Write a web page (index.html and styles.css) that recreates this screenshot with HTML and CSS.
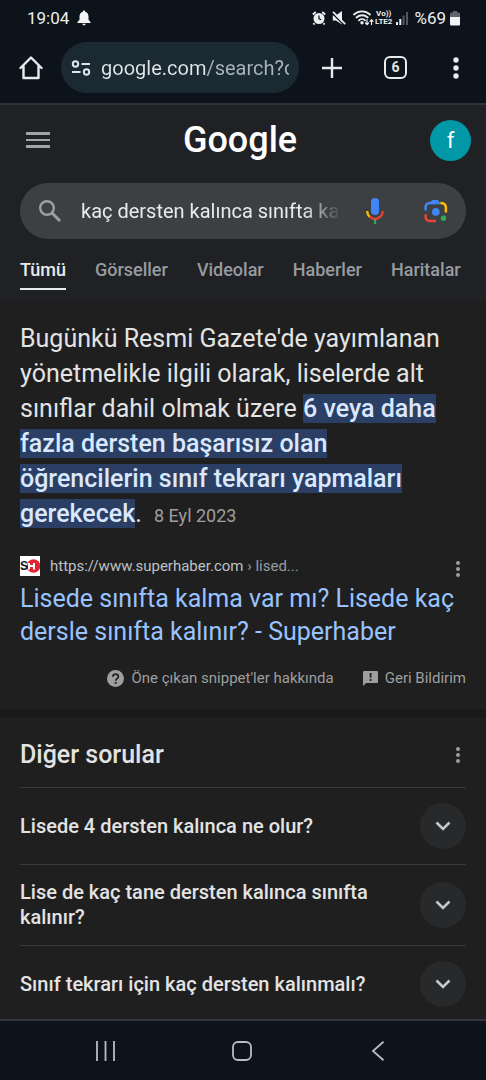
FILE: index.html
```html
<!DOCTYPE html>
<html lang="tr">
<head>
<meta charset="utf-8">
<meta name="viewport" content="width=device-width, initial-scale=1">
<title>Google Arama</title>
<link rel="stylesheet" href="styles.css">
</head>
<body>
<div class="status">
  <span class="clock">19:04</span>
  <svg width="14" height="16" viewBox="0 0 14 16" fill="#f1f3f4" aria-hidden="true"><path d="M7 0.5c.8 0 1.200.5 1.200 1.200 2.300.6 3.300 2.500 3.300 4.800v3.200L13.500 12v1H.500v-1l2-2.300V6.500c0-2.300 1-4.200 3.300-4.800C5.800 1 6.200.500 7 .500zM5.300 13.700h3.400c-.2 1-.9 1.600-1.700 1.600s-1.500-.6-1.700-1.600z"/></svg>
  <div class="status-icons">
    <svg width="14" height="14" viewBox="0 0 14 14" aria-hidden="true"><circle cx="7" cy="7.500" r="5.500" fill="#eceff1"/><path d="M.8 3.500L3.800 1M13.200 3.500L10.200 1M2.500 12.200L1.500 13.500M11.500 12.200l1 1.300" stroke="#eceff1" stroke-width="1.900"/><path d="M7 4.500v3.300l2.200 1" fill="none" stroke="#0d131a" stroke-width="1.200"/></svg>
    <svg class="mute" width="14" height="14" viewBox="0 0 14 14" aria-hidden="true"><path d="M.8 4.500h3L10 0v13.500L3.800 9.500h-3z" fill="#eceff1"/><path d="M0 2L11.500 13.500" stroke="#0d131a" stroke-width="1.300"/><path d="M1 .8L13.200 13.200" stroke="#eceff1" stroke-width="1.700"/></svg>
    <svg class="wifi" width="21" height="16" viewBox="0 0 21 16" fill="none" stroke="#eceff1" stroke-width="1.800" stroke-linecap="round" aria-hidden="true"><path d="M1 4.500C5.500.300 12.500.300 17 4.500M3.500 7.500c3.200-3 8-3 11.200 0M6 10.300c1.700-1.600 4.300-1.600 6 0"/><circle cx="9" cy="12.700" r=".8" fill="#eceff1"/><path d="M14 9.500v5M12.500 13l1.500 1.700 1.500-1.700M18.500 14.500V9.800M17 11.300l1.500-1.700L20 11.300" stroke-width="1.200"/></svg>
    <span class="volte"><span>Vo))</span><span>LTE2</span></span>
    <svg class="signal" width="12" height="14" viewBox="0 0 12 14" aria-hidden="true"><path d="M0 11h2v3H0zM3.300 8h2v6h-2z" fill="#eceff1"/><path d="M6.600 4.500h2V14h-2zM10 1h2v13h-2z" fill="#50575d"/></svg>
    <span class="percent">%69</span>
    <svg width="10" height="15" viewBox="0 0 10 15" aria-hidden="true"><path d="M3 0h4v1.500h1.500C9.500 1.500 10 2 10 3v3H0V3c0-1 .5-1.500 1.500-1.500H3z" fill="#60666b"/><path d="M0 6h10v7c0 1-.5 1.500-1.500 1.500h-7C.5 14.500 0 14 0 13z" fill="#f1f3f4"/></svg>
  </div>
</div>

<div class="toolbar">
  <button class="icon-btn" aria-label="Ana sayfa"><svg width="24" height="24" viewBox="0 0 24 24" fill="none" stroke="#e8eaed" stroke-width="2.400" stroke-linecap="round" stroke-linejoin="round"><path d="M1.500 12L12 1.500 22.500 12M4.500 10v12h15V10"/></svg></button>
  <div class="omnibox">
    <svg width="20" height="16" viewBox="0 0 20 16" fill="none" stroke="#dfe6ea" stroke-width="2" aria-hidden="true"><circle cx="4.500" cy="4" r="2.700"/><path d="M10.500 4H19M1 12h8.500"/><circle cx="15.500" cy="12" r="2.700"/></svg>
    <input class="address" type="text" aria-label="Adres çubuğu" value="google.com/search?q=">
  </div>
  <button class="icon-btn add" aria-label="Yeni sekme"><svg width="22" height="22" viewBox="0 0 22 22" stroke="#e8eaed" stroke-width="2.400"><path d="M11 1v20M1 11h20"/></svg></button>
  <button class="tab-count" aria-label="6 sekme">6</button>
  <button class="icon-btn" aria-label="Menü"><svg width="6" height="22" viewBox="0 0 6 22" fill="#e8eaed"><circle cx="3" cy="3" r="2.700"/><circle cx="3" cy="11" r="2.700"/><circle cx="3" cy="19" r="2.700"/></svg></button>
</div>

<header class="header">
  <div class="brand-row">
    <button class="icon-btn" aria-label="Ana menü"><svg width="24" height="18" viewBox="0 0 24 18" fill="#a0a3a7"><path d="M0 1h24v3H0zM0 8h24v2H0zM0 14h24v3H0z"/></svg></button>
    <a class="logo" href="#">Google</a>
    <button class="avatar" aria-label="Google hesabı">f</button>
  </div>
  <form class="search">
    <button class="icon-btn" type="button" aria-label="Ara"><svg width="24" height="24" viewBox="0 0 24 24" fill="none" stroke="#9aa0a6" stroke-width="2.400"><circle cx="9" cy="9" r="6.800"/><path d="M14 14l8 8" stroke-width="3"/></svg></button>
    <input class="query" type="text" aria-label="Arama" value="kaç dersten kalınca sınıfta kalınır">
    <button class="icon-btn" type="button" aria-label="Sesli arama"><svg width="18" height="26" viewBox="0 0 18 26" fill="none" stroke-width="2.200"><rect x="5" y="0" width="8" height="17" rx="4" fill="#4285f4"/><path d="M1.200 13c0 2.500 1 4.500 2.700 6" stroke="#fbbc04"/><path d="M3.700 18.700c3.300 2.900 7.300 2.900 10.600 0 1.600-1.500 2.500-3.300 2.500-5.700" stroke="#ea4335"/><path d="M9 21.700V26" stroke="#34a853"/></svg></button>
    <button class="icon-btn lens" type="button" aria-label="Google Lens"><svg width="24" height="24" viewBox="0 0 25 25" fill="none" stroke-width="2.600"><path d="M1.700 12V8.500c0-2.600 1.600-4.300 4.200-4.300H12" stroke="#4285f4"/><path d="M6 4.500L8.500 1h6L17 4.500v1H6z" fill="#4285f4"/><path d="M17 4.200c3.600 0 5.800 1.700 5.800 4.800V14" stroke="#fbbc04"/><path d="M1.700 16v2.500c0 2.800 1.500 4.300 4.200 4.300h6.600" stroke="#ea4335"/><circle cx="12.300" cy="13.500" r="4" fill="#4285f4"/><circle cx="20.300" cy="20" r="2.800" fill="#34a853"/></svg></button>
  </form>
  <nav class="tabs">
    <a class="active" href="#">Tümü</a>
    <a href="#">Görseller</a>
    <a href="#">Videolar</a>
    <a href="#">Haberler</a>
    <a href="#">Haritalar</a>
  </nav>
</header>

<main>
  <section class="snippet">
    <p class="answer">Bugünkü Resmi Gazete'de yayımlanan yönetmelikle ilgili olarak, liselerde alt sınıflar dahil olmak üzere <mark>6 veya daha fazla dersten başarısız olan öğrencilerin sınıf tekrarı yapmaları gerekecek</mark>. <time>8 Eyl 2023</time></p>
    <div class="source">
      <svg width="20" height="20" viewBox="0 0 20 20" aria-hidden="true"><rect width="20" height="20" fill="#fff"/><circle cx="13.500" cy="10" r="6.800" fill="#e02430"/><text class="fav-s" x="0" y="14">S</text><path d="M9 7v6.500M9 10h5M14 7v6.500" stroke="#fff" stroke-width="2"/></svg>
      <cite>https://www.superhaber.com<span> › lised...</span></cite>
      <button class="icon-btn more" aria-label="Bu sonuç hakkında"><svg width="4" height="16" viewBox="0 0 4 16" fill="#9e9e9e"><circle cx="2" cy="2" r="2"/><circle cx="2" cy="8" r="2"/><circle cx="2" cy="14" r="2"/></svg></button>
    </div>
    <a class="title" href="#">Lisede sınıfta kalma var mı? Lisede kaç dersle sınıfta kalınır? - Superhaber</a>
    <div class="feedback">
      <a href="#"><svg width="17" height="17" viewBox="0 0 17 17" aria-hidden="true"><circle cx="8.500" cy="8.500" r="8.500" fill="#9e9e9e"/><path d="M5.800 6.800c0-3.600 5.600-3.400 5.600-.2 0 2-2.700 2.100-2.700 4.200" fill="none" stroke="#1f1f1f" stroke-width="1.700"/><path d="M7.800 12h1.800v1.900H7.800z" fill="#1f1f1f"/></svg>Öne çıkan snippet'ler hakkında</a>
      <a href="#"><svg width="15" height="15" viewBox="0 0 15 15" aria-hidden="true"><path d="M1.500 0h12c1 0 1.500.5 1.500 1.500v9c0 1-.5 1.500-1.500 1.500H3l-3 3V1.500C0 .5.500 0 1.500 0z" fill="#9e9e9e"/><path d="M6.700 2h1.800v4.700H6.700zM6.700 8h1.800v1.900H6.700z" fill="#1f1f1f"/></svg>Geri Bildirim</a>
    </div>
  </section>

  <section class="questions">
    <div class="questions-head">
      <h2>Diğer sorular</h2>
      <button class="icon-btn more" aria-label="Diğer sorular hakkında"><svg width="4" height="16" viewBox="0 0 4 16" fill="#9e9e9e"><circle cx="2" cy="2" r="2"/><circle cx="2" cy="8" r="2"/><circle cx="2" cy="14" r="2"/></svg></button>
    </div>
    <button class="question"><span>Lisede 4 dersten kalınca ne olur?</span><span class="chevron"><svg width="16" height="10" viewBox="0 0 16 10" fill="none" stroke="#c4c7d0" stroke-width="2.600"><path d="M1.500 1.500L8 8l6.500-6.500"/></svg></span></button>
    <button class="question"><span>Lise de kaç tane dersten kalınca sınıfta kalınır?</span><span class="chevron"><svg width="16" height="10" viewBox="0 0 16 10" fill="none" stroke="#c4c7d0" stroke-width="2.600"><path d="M1.500 1.500L8 8l6.500-6.500"/></svg></span></button>
    <button class="question"><span>Sınıf tekrarı için kaç dersten kalınmalı?</span><span class="chevron"><svg width="16" height="10" viewBox="0 0 16 10" fill="none" stroke="#c4c7d0" stroke-width="2.600"><path d="M1.500 1.500L8 8l6.500-6.500"/></svg></span></button>
  </section>
</main>

<nav class="system-nav">
  <button class="icon-btn" aria-label="Son uygulamalar"><svg width="20" height="20" viewBox="0 0 20 20" stroke="#b9bdc1" stroke-width="1.800"><path d="M1 0v20M9.500 0v20M18 0v20"/></svg></button>
  <button class="icon-btn" aria-label="Ana ekran"><svg width="20" height="20" viewBox="0 0 20 20" fill="none" stroke="#b9bdc1" stroke-width="1.800"><rect x="1" y="1" width="18" height="18" rx="5"/></svg></button>
  <button class="icon-btn" aria-label="Geri"><svg width="20" height="20" viewBox="0 0 20 20" fill="none" stroke="#b9bdc1" stroke-width="1.800"><path d="M15.500 .8L5 10l10.500 9.200"/></svg></button>
</nav>
</body>
</html>
```
FILE: styles.css
```css
* { box-sizing: border-box; }

body {
  margin: 0;
  min-height: 100vh;
  display: flex;
  flex-direction: column;
  background: #1f1f1f;
  color: #e3e3e3;
  font-family: Roboto, "Liberation Sans", sans-serif;
}

button, input {
  margin: 0;
  padding: 0;
  border: 0;
  background: none;
  color: inherit;
  font: inherit;
}

a { color: inherit; text-decoration: none; }
svg { display: block; flex: none; }

.icon-btn { display: flex; flex: none; }

/* Device status bar */
.status {
  display: flex;
  align-items: center;
  gap: 8px;
  height: 36px;
  padding: 0 26px 0 27px;
  background: #0d131a;
  color: #eceff1;
  font-size: 17px;
}
.status-icons { display: flex; align-items: center; margin-left: auto; }
.mute { margin-left: 6px; }
.wifi { margin-left: 7px; }
.volte {
  display: flex;
  flex-direction: column;
  align-items: center;
  margin-left: 1px;
  font-size: 8px;
  font-weight: 700;
  line-height: 8px;
}
.signal { margin-left: 4px; }
.percent { margin: 0 4px 0 6px; }

/* Browser toolbar */
.toolbar {
  display: flex;
  align-items: center;
  height: 69px;
  padding: 0 27px 4px 19px;
  border-bottom: 2px solid #303336;
  background: #0d131a;
}
.omnibox {
  flex: 1;
  min-width: 0;
  display: flex;
  align-items: center;
  gap: 10px;
  height: 51px;
  margin: 0 22px 0 18px;
  padding: 0 10px;
  border-radius: 26px;
  background: #1b2933;
}
.address {
  flex: 1;
  min-width: 0;
  height: 32px;
  font-size: 20px;
  color: transparent;
  background: linear-gradient(90deg, #dfe6ea 105px, #a9b6be 105px);
  -webkit-background-clip: text;
  background-clip: text;
}
.tab-count {
  width: 23px;
  height: 23px;
  margin: 0 46px 0 41px;
  border: 2px solid #e8eaed;
  border-radius: 6px;
  font-size: 14px;
  font-weight: 700;
  line-height: 19px;
}

/* Search header */
.header { background: #202124; }
.brand-row {
  display: flex;
  align-items: center;
  justify-content: space-between;
  height: 78px;
  padding: 0 15px 8px 26px;
}
.logo {
  color: #fff;
  font-size: 36px;
  font-weight: 500;
  line-height: 48px;
}
.avatar {
  width: 41px;
  height: 41px;
  border-radius: 50%;
  background: #0097a7;
  color: #fff;
  font-size: 22px;
}
.search {
  display: flex;
  align-items: center;
  height: 56px;
  margin: 0 20px;
  padding: 0 18px;
  border-radius: 28px;
  background: #3c4043;
}
.query {
  flex: 1;
  min-width: 0;
  height: 32px;
  margin: 0 24px 0 19px;
  color: #e8eaed;
  font-size: 20px;
  -webkit-mask-image: linear-gradient(90deg, #000 85%, transparent);
  mask-image: linear-gradient(90deg, #000 85%, transparent);
}
.lens { margin-left: 40px; }
.tabs {
  display: flex;
  gap: 29px;
  height: 61px;
  padding: 11px 20px 0;
  overflow: hidden;
  color: #969ba1;
  font-size: 18px;
  font-weight: 500;
  line-height: 40px;
  white-space: nowrap;
}
.tabs a { height: 40px; }
.tabs .active { color: #e8eaed; border-bottom: 2px solid #e8eaed; }

/* Featured answer */
main { flex: 1; }
.snippet { padding: 21px 20px; border-bottom: 9px solid #17191b; }
.answer { margin: 0; font-size: 25px; line-height: 35px; }
mark { background: #2a3f63; color: #d9e7ff; font-weight: 500; }
time { margin-left: 6px; color: #9e9e9e; font-size: 18px; }
.source {
  display: flex;
  align-items: center;
  gap: 10px;
  height: 24px;
  margin-top: 21px;
}
.source .more { margin: 6px 6px 0 auto; }
.fav-s { font: 700 12px "Liberation Sans", sans-serif; fill: #111; }
cite { color: #bdc1c6; font-size: 15px; font-style: normal; }
cite span { color: #969ba1; }
.title {
  display: block;
  margin-top: 4px;
  color: #99c3ff;
  font-size: 25px;
  line-height: 33px;
}
.feedback {
  display: flex;
  justify-content: flex-end;
  gap: 29px;
  margin-top: 20px;
  color: #9e9e9e;
  font-size: 15px;
  line-height: 20px;
}
.feedback a { display: flex; align-items: center; gap: 7px; }

/* Related questions */
.questions { padding: 0 20px; }
.questions-head {
  display: flex;
  align-items: center;
  justify-content: space-between;
  height: 69px;
  padding: 4px 6px 0 0;
}
h2 { margin: 0; font-size: 25px; font-weight: 500; line-height: 32px; }
.question {
  display: flex;
  align-items: center;
  justify-content: space-between;
  gap: 30px;
  width: 100%;
  padding: 15px 0;
  border-top: 1px solid #37393b;
  font-size: 20px;
  font-weight: 500;
  line-height: 25px;
  text-align: left;
}
.question:last-child { padding-bottom: 12px; }
.chevron {
  display: flex;
  flex: none;
  align-items: center;
  justify-content: center;
  width: 46px;
  height: 46px;
  border-radius: 50%;
  background: #28292b;
}

/* Device navigation */
.system-nav {
  display: flex;
  align-items: center;
  justify-content: space-between;
  height: 61px;
  padding: 0 98px 0 96px;
  border-top: 2px solid #34383c;
  background: #0d131a;
}
```
